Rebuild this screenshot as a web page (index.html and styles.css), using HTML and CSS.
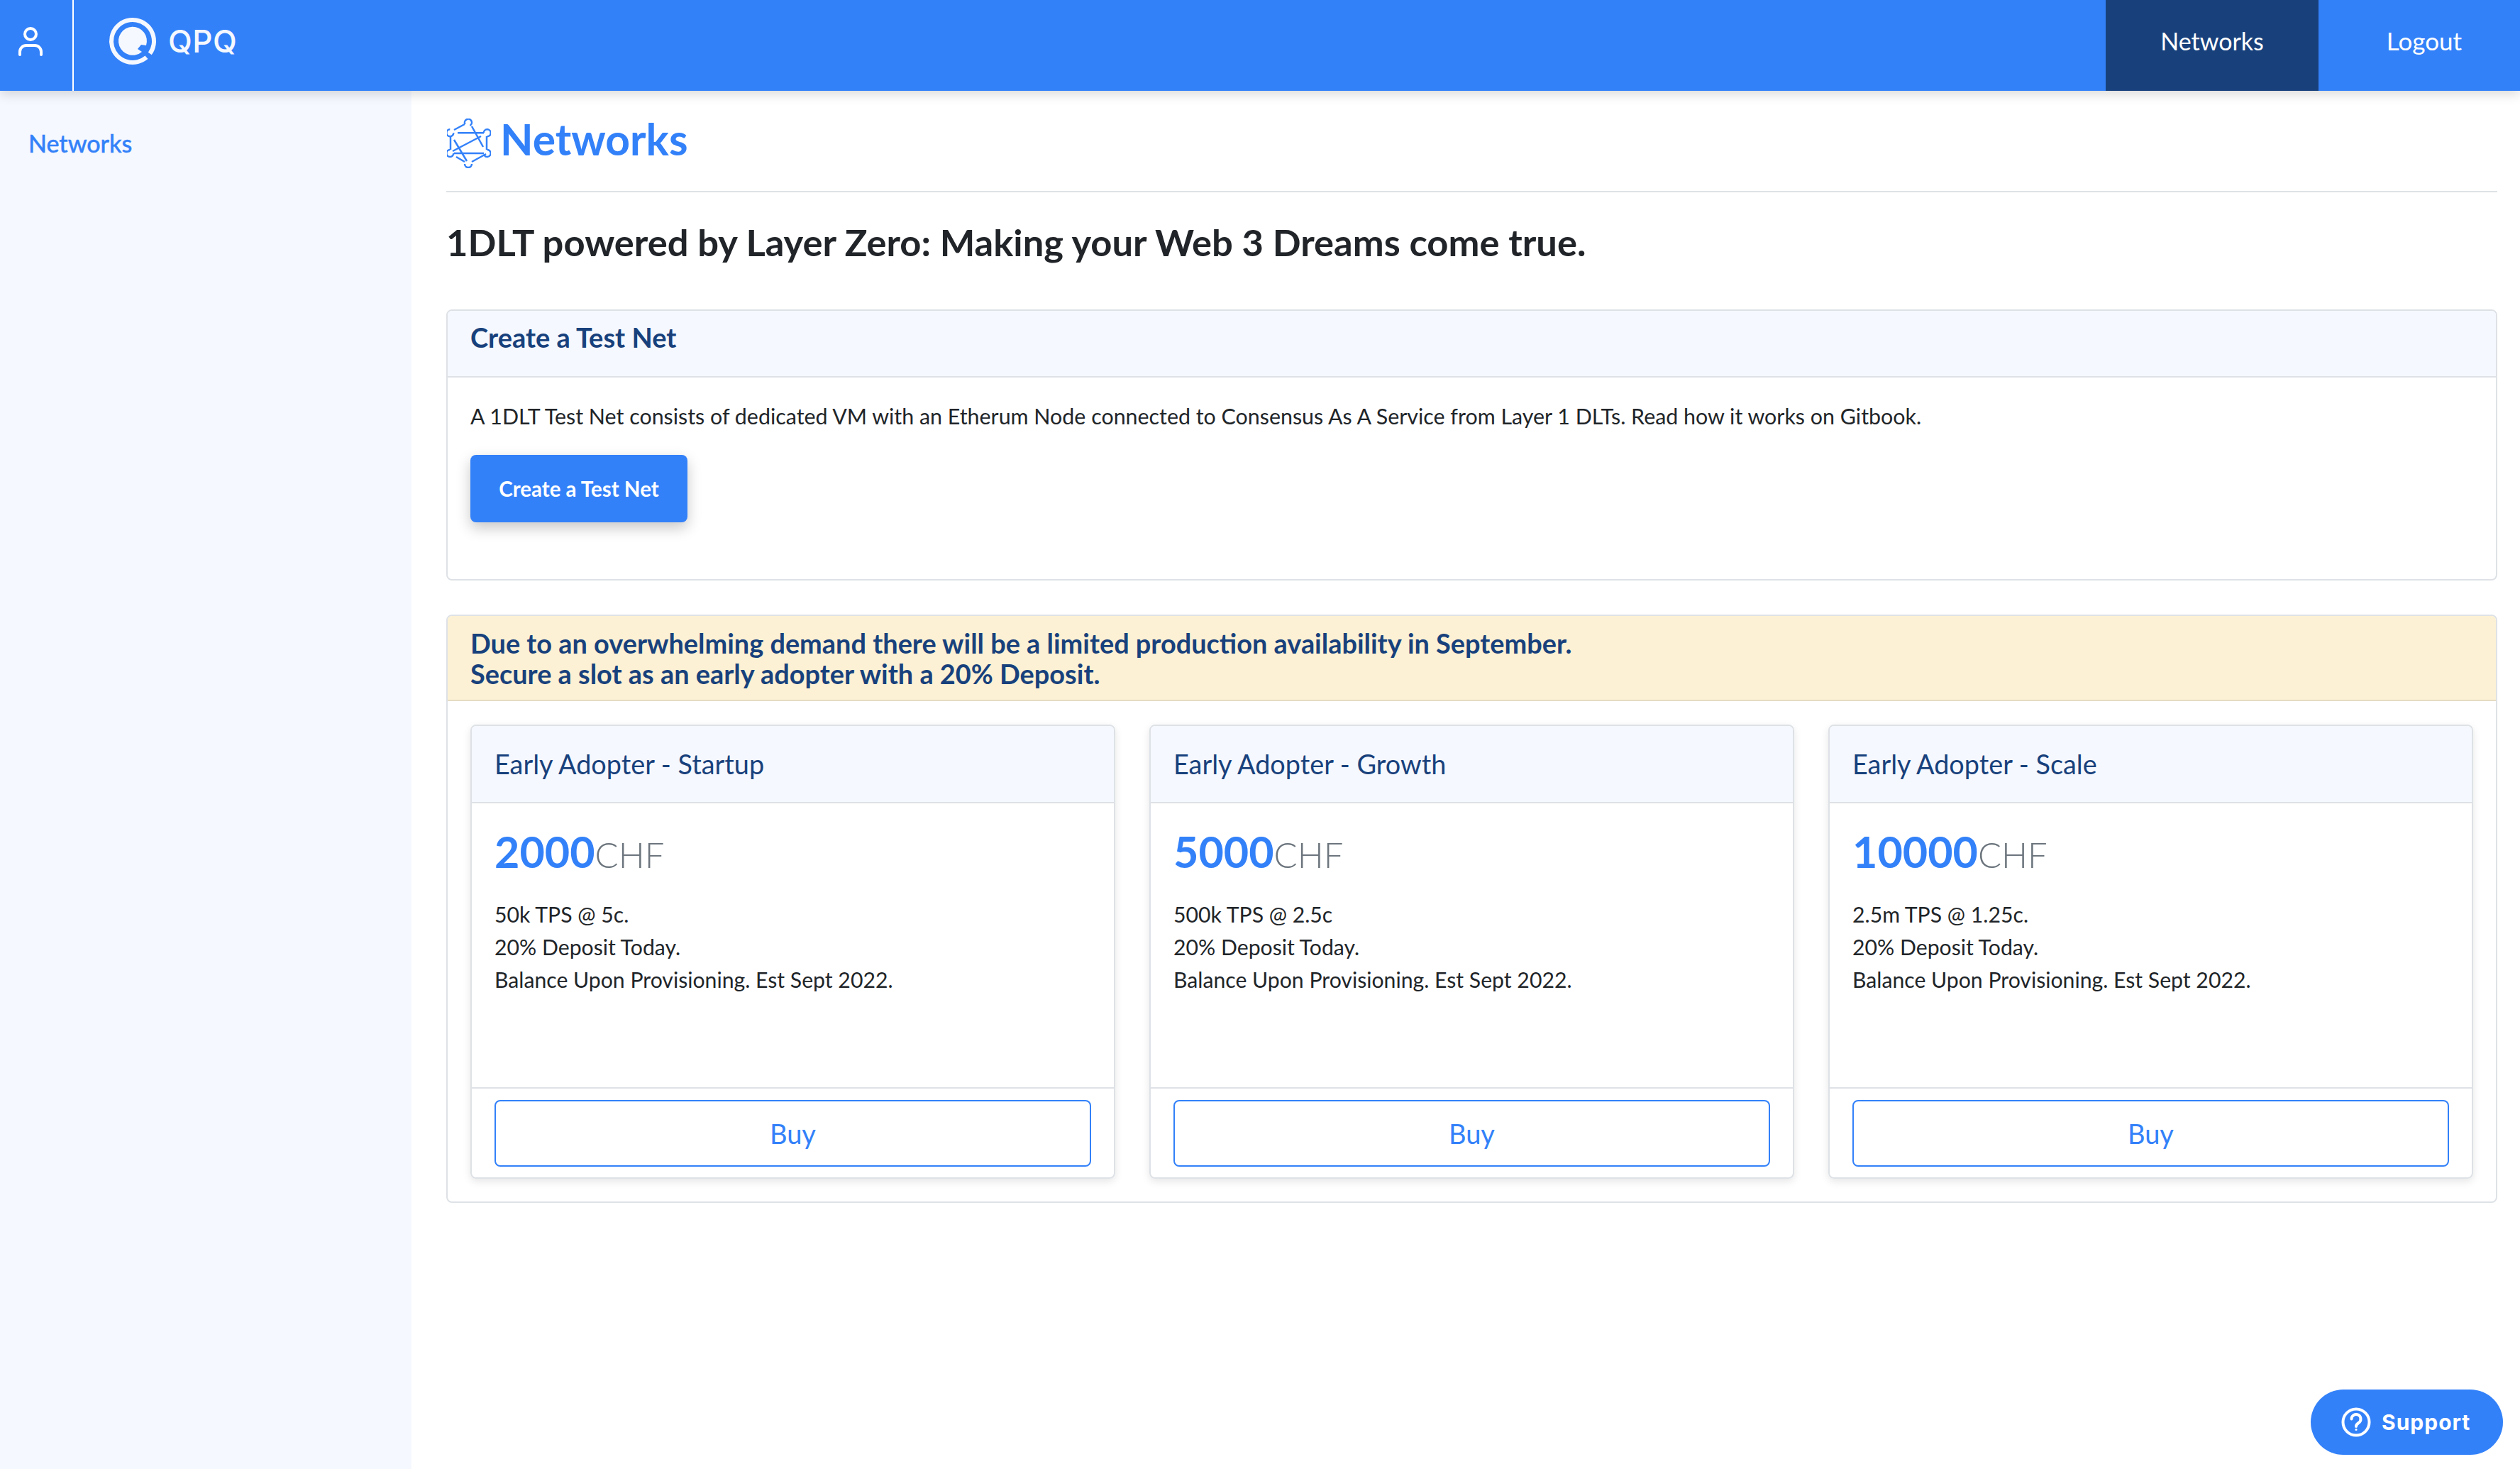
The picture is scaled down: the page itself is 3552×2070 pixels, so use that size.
FILE: index.html
```html
<!DOCTYPE html>
<html lang="en">
<head>
<meta charset="utf-8">
<title>Networks</title>
<link rel="stylesheet" href="styles.css">
</head>
<body>
<header class="topbar">
  <div class="user-cell">
    <svg class="user-icon" viewBox="0 0 40 56" width="40" height="56"><circle cx="20" cy="12" r="8"/><path d="M5 41v-4a9 9 0 0 1 9-9h12a9 9 0 0 1 9 9v4"/></svg>
  </div>
  <a class="brand">
    <svg class="brand-mark" viewBox="0 0 70 70" width="70" height="70"><path class="ring" d="M59.300 52.600A30 30 0 1 0 54.500 57.800"/><path class="disc" d="M48 50L42 46L47 40L54 41A20 20 0 1 0 48 50Z"/></svg>
    <span class="brand-name">QPQ</span>
  </a>
  <nav class="topnav">
    <a class="topnav-item is-active networks-link">Networks</a>
    <a class="topnav-item logout-link">Logout</a>
  </nav>
</header>
<div class="shell">
  <aside class="sidebar"><a class="side-link">Networks</a></aside>
  <main class="content">
    <div class="page-title">
      <svg class="net-icon" viewBox="20 17 62 70" width="62" height="70">
        <path d="M45 25 30 33M55 28 71 57M35 37.300H72M68 42 28 63M25 42V61M76 42V61M30 66H72M30 47 48 77M33 71l12 7M55 78l20-11"/>
        <path d="M45.500 25A5 5 0 1 1 52.500 27M71.700 37.300A5 5 0 1 1 76.700 42.300M24.300 32.300A5 5 0 1 0 29.300 37.300M24.300 61A5 5 0 1 0 29.300 66M76.700 61A5 5 0 1 1 72.700 69M45 81A5 5 0 1 0 55 81"/>
      </svg>
      <h1>Networks</h1>
    </div>
    <h2 class="tagline">1DLT powered by Layer Zero: Making your Web 3 Dreams come true.</h2>
    <section class="card test-card">
      <div class="card-head"><h3>Create a Test Net</h3></div>
      <div class="card-body">
        <p class="intro">A 1DLT Test Net consists of dedicated VM with an Etherum Node connected to Consensus As A Service from Layer 1 DLTs. Read how it works on Gitbook.</p>
        <button class="btn-primary">Create a Test Net</button>
      </div>
    </section>
    <section class="card offer-card">
      <div class="card-head notice"><h3>Due to an overwhelming demand there will be a limited production availability in September.<br>Secure a slot as an early adopter with a 20% Deposit.</h3></div>
      <div class="plans">
        <article class="plan">
          <div class="plan-head">Early Adopter - Startup</div>
          <div class="plan-body">
            <div class="price"><b>2000</b><span>CHF</span></div>
            <p>50k TPS @ 5c.</p><p>20% Deposit Today.</p><p>Balance Upon Provisioning. Est Sept 2022.</p>
          </div>
          <div class="plan-foot"><button class="btn-outline">Buy</button></div>
        </article>
        <article class="plan">
          <div class="plan-head">Early Adopter - Growth</div>
          <div class="plan-body">
            <div class="price"><b>5000</b><span>CHF</span></div>
            <p>500k TPS @ 2.5c</p><p>20% Deposit Today.</p><p>Balance Upon Provisioning. Est Sept 2022.</p>
          </div>
          <div class="plan-foot"><button class="btn-outline">Buy</button></div>
        </article>
        <article class="plan">
          <div class="plan-head">Early Adopter - Scale</div>
          <div class="plan-body">
            <div class="price"><b>10000</b><span>CHF</span></div>
            <p>2.5m TPS @ 1.25c.</p><p>20% Deposit Today.</p><p>Balance Upon Provisioning. Est Sept 2022.</p>
          </div>
          <div class="plan-foot"><button class="btn-outline">Buy</button></div>
        </article>
      </div>
    </section>
  </main>
</div>
<a class="support">
  <svg viewBox="0 0 44 44" width="44" height="44"><circle cx="22" cy="22" r="18.500"/><path d="M15.500 17.500a6.500 6.500 0 1 1 10 5.500c-2 1.300-3.500 2.500-3.500 5"/><circle class="dot" cx="22" cy="32.500" r="1.500"/></svg>
  <span>Support</span>
</a>
</body>
</html>
```
FILE: styles.css
```css
* { box-sizing: border-box; }
html, body { margin: 0; height: 100%; }
body { font-family: "Lato", "Noto Sans", sans-serif; color: #212529; background: #fff; overflow: hidden; }
h1, h2, h3, p { margin: 0; }

.topbar { position: relative; z-index: 2; display: flex; height: 128px; background: #3381f9; box-shadow: 0 4px 16px rgba(0,0,0,.16); color: #fff; }
.user-cell { width: 104px; border-right: 2px solid #fff; display: flex; align-items: center; padding-left: 23px; }
.user-icon { fill: none; stroke: #fff; stroke-width: 4; stroke-linecap: round; }
.brand { display: flex; align-items: center; margin-left: 48px; gap: 15px; height: 116px; }
.brand-mark .ring { fill: none; stroke: #f5f8fe; stroke-width: 6; }
.brand-mark .disc { fill: #f5f8fe; }
.brand-name { font-family: "Inter", sans-serif; font-size: 44px; font-weight: 500; letter-spacing: .5px; color: #f5f8fe; }
.topnav { margin-left: auto; display: flex; }
.topnav-item { display: flex; align-items: center; justify-content: center; font-size: 34px; height: 114px; }
.networks-link { width: 300px; height: 128px; padding-bottom: 14px; background: #18417c; }
.logout-link { width: 284px; padding-left: 14px; font-size: 35px; }

.shell { display: flex; height: calc(100% - 128px); }
.sidebar { width: 580px; flex: none; background: #f5f8fe; padding: 54px 40px; }
.side-link { color: #3381f9; font-size: 34px; font-weight: 500; line-height: 40px; -webkit-text-stroke: .4px #3381f9; }
.content { flex: 1; padding: 30px 33px 0 49px; }
.page-title { display: flex; align-items: flex-start; gap: 13px; height: 113px; border-bottom: 2px solid #dee2e6; }
.page-title h1 { color: #3381f9; font-size: 60.500px; font-weight: 700; line-height: 70px; margin-top: 3px; }
.net-icon { fill: none; stroke: #3381f9; stroke-width: 2.500; margin: 9px 0 0 1px; }
.tagline { font-size: 52.500px; font-weight: 700; line-height: 64px; margin: 38px 0 63px; }

.card { border: 2px solid #dee2e6; border-radius: 8px; overflow: hidden; margin-bottom: 48px; }
.card-head { background: #f5f8fe; border-bottom: 2px solid #dee2e6; padding: 15px 32px; height: 94px; }
.card-head h3 { color: #18417c; font-size: 38px; font-weight: 700; line-height: 44px; }
.card-head.notice { background: #fcf1d4; height: 120px; border-bottom-color: #e5dcc3; padding-top: 17px; }
.card-head.notice h3 { font-size: 37.900px; line-height: 43px; }
.test-card { height: 382px; }
.card-body { padding: 34px 32px; }
.intro { font-size: 30.400px; line-height: 40px; }
.btn-primary { display: block; margin-top: 35px; width: 306px; height: 95px; border: 0; border-radius: 8px; background: #3381f9; color: #fff; font: 700 29.500px "Lato", sans-serif; box-shadow: 0 8px 20px rgba(0,0,0,.22); }
.offer-card { height: 829px; }
.plans { display: grid; grid-template-columns: repeat(3, 909px); gap: 48px; padding: 33px 32px; }
.plan { height: 640px; display: flex; flex-direction: column; border: 2px solid #dee2e6; border-radius: 8px; box-shadow: 0 4px 12px rgba(0,0,0,.1); overflow: hidden; }
.plan-head { background: #f5f8fe; color: #18417c; height: 109px; border-bottom: 2px solid #dee2e6; padding: 32px 32px; font-size: 37.800px; line-height: 44px; }
.plan-body { flex: 1; padding: 31px 32px 0; }
.plan-body p { font-size: 30.200px; line-height: 46px; }
.price { height: 89px; margin-bottom: 13px; color: #6c757d; font-size: 49px; line-height: 74px; font-weight: 300; }
.price b { color: #3381f9; font-size: 61px; font-weight: 700; }
.plan-foot { height: 127px; border-top: 2px solid #dee2e6; padding: 16px 32px; }
.btn-outline { width: 100%; height: 94px; background: #fff; border: 2px solid #3381f9; border-radius: 8px; color: #3381f9; font: 400 38px "Lato", sans-serif; }
.support { position: fixed; right: 24px; bottom: 20px; width: 271px; height: 92px; border-radius: 46px; background: #3381f9; color: #fff; display: flex; align-items: center; padding-left: 42px; gap: 14px; font: 700 30px "Inter", sans-serif; letter-spacing: 1px; }
.support svg { fill: none; stroke: #fff; stroke-width: 4; stroke-linecap: round; }
.support .dot { fill: #fff; stroke: none; }
```
